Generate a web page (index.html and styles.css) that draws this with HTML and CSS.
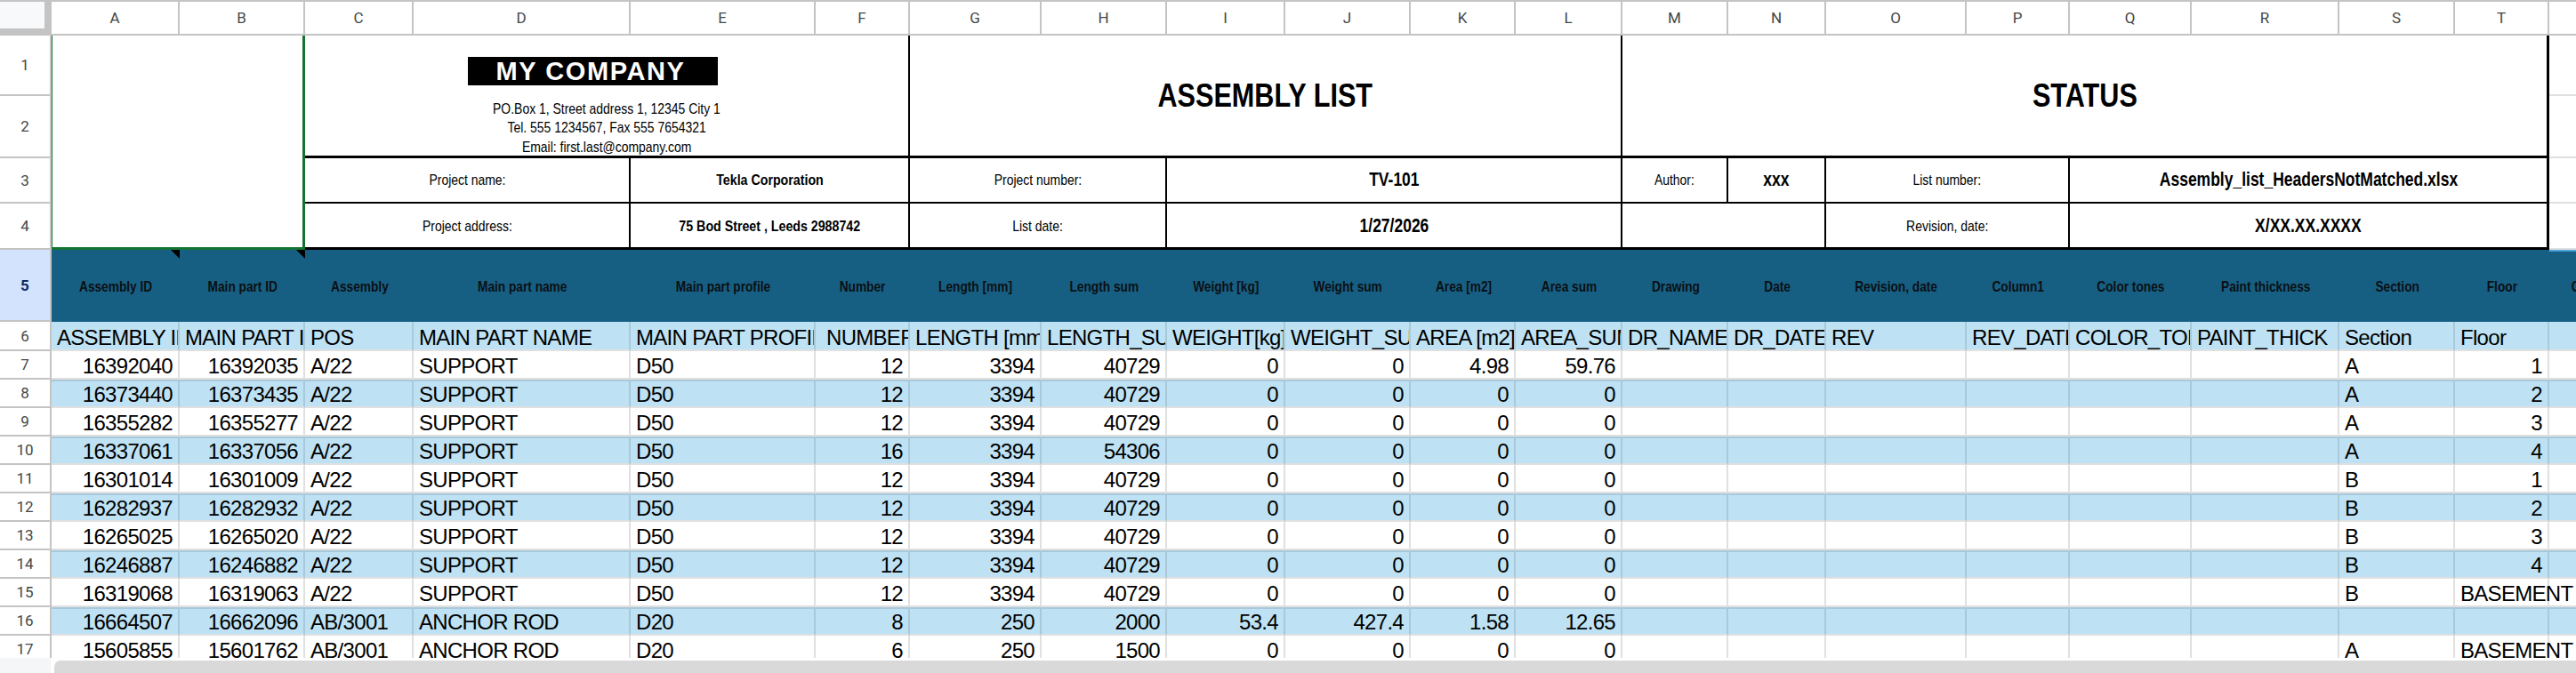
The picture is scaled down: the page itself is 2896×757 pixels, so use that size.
FILE: index.html
```html
<!DOCTYPE html>
<html>
<head>
<meta charset="utf-8">
<title>Assembly list</title>
<link rel="stylesheet" href="styles.css">
</head>
<body>
<div class="sheet">
<table class="grid">
<colgroup>
<col class="c-row"><col class="c-a"><col class="c-b"><col class="c-c"><col class="c-d"><col class="c-e"><col class="c-f"><col class="c-g"><col class="c-h"><col class="c-i"><col class="c-j"><col class="c-k"><col class="c-l"><col class="c-m"><col class="c-n"><col class="c-o"><col class="c-p"><col class="c-q"><col class="c-r"><col class="c-s"><col class="c-t"><col class="c-u">
</colgroup>
<tr class="letters">
<th class="corner"><div class="corner-box"></div></th>
<th>A</th><th>B</th><th>C</th><th>D</th><th>E</th><th>F</th><th>G</th><th>H</th><th>I</th><th>J</th><th>K</th><th>L</th><th>M</th><th>N</th><th>O</th><th>P</th><th>Q</th><th>R</th><th>S</th><th>T</th><th></th>
</tr>
<tr class="r1">
<th class="num">1</th>
<td class="logo-cell" colspan="2" rowspan="4"></td>
<td class="company" colspan="4" rowspan="2">
<div class="company-box">
<div class="company-name">MY COMPANY</div>
<div class="company-line"><span class="nw">PO.Box 1, Street address 1, 12345 City 1</span></div>
<div class="company-line"><span class="nw">Tel. 555 1234567, Fax 555 7654321</span></div>
<div class="company-line"><span class="nw">Email: first.last@company.com</span></div>
</div>
</td>
<td class="title" colspan="6" rowspan="2"><span class="nw">ASSEMBLY LIST</span></td>
<td class="title edge-r" colspan="8" rowspan="2"><span class="nw">STATUS</span></td>
<td class="free"></td>
</tr>
<tr class="r2"><th class="num">2</th><td class="free"></td></tr>
<tr class="r3">
<th class="num">3</th>
<td class="label" colspan="2"><span class="nw">Project name:</span></td>
<td class="value" colspan="2"><span class="nw">Tekla Corporation</span></td>
<td class="label" colspan="2"><span class="nw">Project number:</span></td>
<td class="value big" colspan="4"><span class="nw">TV-101</span></td>
<td class="label"><span class="nw">Author:</span></td>
<td class="value big"><span class="nw">xxx</span></td>
<td class="label" colspan="2"><span class="nw">List number:</span></td>
<td class="value big edge-r" colspan="4"><span class="nw">Assembly_list_HeadersNotMatched.xlsx</span></td>
<td class="free"></td>
</tr>
<tr class="r4">
<th class="num">4</th>
<td class="label" colspan="2"><span class="nw">Project address:</span></td>
<td class="value" colspan="2"><span class="nw">75 Bod Street , Leeds 2988742</span></td>
<td class="label" colspan="2"><span class="nw">List date:</span></td>
<td class="value big" colspan="4"><span class="nw">1/27/2026</span></td>
<td class="label" colspan="2"></td>
<td class="label" colspan="2"><span class="nw">Revision, date:</span></td>
<td class="value big edge-r" colspan="4"><span class="nw">X/XX.XX.XXXX</span></td>
<td class="free"></td>
</tr>
<tr class="r5">
<th class="num active">5</th>
<td class="noted"><span class="nw">Assembly ID</span></td>
<td class="noted"><span class="nw">Main part ID</span></td>
<td><span class="nw">Assembly</span></td>
<td><span class="nw">Main part name</span></td>
<td><span class="nw">Main part profile</span></td>
<td><span class="nw">Number</span></td>
<td><span class="nw">Length [mm]</span></td>
<td><span class="nw">Length sum</span></td>
<td><span class="nw">Weight [kg]</span></td>
<td><span class="nw">Weight sum</span></td>
<td><span class="nw">Area [m2]</span></td>
<td><span class="nw">Area sum</span></td>
<td><span class="nw">Drawing</span></td>
<td><span class="nw">Date</span></td>
<td><span class="nw">Revision, date</span></td>
<td><span class="nw">Column1</span></td>
<td><span class="nw">Color tones</span></td>
<td><span class="nw">Paint thickness</span></td>
<td><span class="nw">Section</span></td>
<td><span class="nw">Floor</span></td>
<td class="last"><span class="nw">Comments</span></td>
</tr>
<tr class="row alt head">
<th class="num">6</th>
<td>ASSEMBLY ID</td><td>MAIN PART ID</td><td>POS</td><td>MAIN PART NAME</td><td>MAIN PART PROFILE</td><td class="indent">NUMBER</td><td>LENGTH [mm]</td><td>LENGTH_SUM</td><td>WEIGHT[kg]</td><td>WEIGHT_SUM</td><td>AREA [m2]</td><td>AREA_SUM</td><td>DR_NAME</td><td>DR_DATE</td><td>REV</td><td>REV_DATE</td><td>COLOR_TONES</td><td>PAINT_THICK</td><td>Section</td><td>Floor</td><td></td>
</tr>
<tr class="row">
<th class="num">7</th>
<td class="n">16392040</td><td class="n">16392035</td><td>A/22</td><td>SUPPORT</td><td>D50</td><td class="n">12</td><td class="n">3394</td><td class="n">40729</td><td class="n">0</td><td class="n">0</td><td class="n">4.98</td><td class="n">59.76</td><td></td><td></td><td></td><td></td><td></td><td></td><td>A</td><td class="n">1</td><td></td>
</tr>
<tr class="row alt">
<th class="num">8</th>
<td class="n">16373440</td><td class="n">16373435</td><td>A/22</td><td>SUPPORT</td><td>D50</td><td class="n">12</td><td class="n">3394</td><td class="n">40729</td><td class="n">0</td><td class="n">0</td><td class="n">0</td><td class="n">0</td><td></td><td></td><td></td><td></td><td></td><td></td><td>A</td><td class="n">2</td><td></td>
</tr>
<tr class="row">
<th class="num">9</th>
<td class="n">16355282</td><td class="n">16355277</td><td>A/22</td><td>SUPPORT</td><td>D50</td><td class="n">12</td><td class="n">3394</td><td class="n">40729</td><td class="n">0</td><td class="n">0</td><td class="n">0</td><td class="n">0</td><td></td><td></td><td></td><td></td><td></td><td></td><td>A</td><td class="n">3</td><td></td>
</tr>
<tr class="row alt">
<th class="num">10</th>
<td class="n">16337061</td><td class="n">16337056</td><td>A/22</td><td>SUPPORT</td><td>D50</td><td class="n">16</td><td class="n">3394</td><td class="n">54306</td><td class="n">0</td><td class="n">0</td><td class="n">0</td><td class="n">0</td><td></td><td></td><td></td><td></td><td></td><td></td><td>A</td><td class="n">4</td><td></td>
</tr>
<tr class="row">
<th class="num">11</th>
<td class="n">16301014</td><td class="n">16301009</td><td>A/22</td><td>SUPPORT</td><td>D50</td><td class="n">12</td><td class="n">3394</td><td class="n">40729</td><td class="n">0</td><td class="n">0</td><td class="n">0</td><td class="n">0</td><td></td><td></td><td></td><td></td><td></td><td></td><td>B</td><td class="n">1</td><td></td>
</tr>
<tr class="row alt">
<th class="num">12</th>
<td class="n">16282937</td><td class="n">16282932</td><td>A/22</td><td>SUPPORT</td><td>D50</td><td class="n">12</td><td class="n">3394</td><td class="n">40729</td><td class="n">0</td><td class="n">0</td><td class="n">0</td><td class="n">0</td><td></td><td></td><td></td><td></td><td></td><td></td><td>B</td><td class="n">2</td><td></td>
</tr>
<tr class="row">
<th class="num">13</th>
<td class="n">16265025</td><td class="n">16265020</td><td>A/22</td><td>SUPPORT</td><td>D50</td><td class="n">12</td><td class="n">3394</td><td class="n">40729</td><td class="n">0</td><td class="n">0</td><td class="n">0</td><td class="n">0</td><td></td><td></td><td></td><td></td><td></td><td></td><td>B</td><td class="n">3</td><td></td>
</tr>
<tr class="row alt">
<th class="num">14</th>
<td class="n">16246887</td><td class="n">16246882</td><td>A/22</td><td>SUPPORT</td><td>D50</td><td class="n">12</td><td class="n">3394</td><td class="n">40729</td><td class="n">0</td><td class="n">0</td><td class="n">0</td><td class="n">0</td><td></td><td></td><td></td><td></td><td></td><td></td><td>B</td><td class="n">4</td><td></td>
</tr>
<tr class="row">
<th class="num">15</th>
<td class="n">16319068</td><td class="n">16319063</td><td>A/22</td><td>SUPPORT</td><td>D50</td><td class="n">12</td><td class="n">3394</td><td class="n">40729</td><td class="n">0</td><td class="n">0</td><td class="n">0</td><td class="n">0</td><td></td><td></td><td></td><td></td><td></td><td></td><td>B</td><td class="spill">BASEMENT</td><td></td>
</tr>
<tr class="row alt">
<th class="num">16</th>
<td class="n">16664507</td><td class="n">16662096</td><td>AB/3001</td><td>ANCHOR ROD</td><td>D20</td><td class="n">8</td><td class="n">250</td><td class="n">2000</td><td class="n">53.4</td><td class="n">427.4</td><td class="n">1.58</td><td class="n">12.65</td><td></td><td></td><td></td><td></td><td></td><td></td><td></td><td></td><td></td>
</tr>
<tr class="row">
<th class="num">17</th>
<td class="n">15605855</td><td class="n">15601762</td><td>AB/3001</td><td>ANCHOR ROD</td><td>D20</td><td class="n">6</td><td class="n">250</td><td class="n">1500</td><td class="n">0</td><td class="n">0</td><td class="n">0</td><td class="n">0</td><td></td><td></td><td></td><td></td><td></td><td></td><td>A</td><td class="spill">BASEMENT</td><td></td>
</tr>
</table>
</div>
<div class="hscroll">
<div class="hscroll-side"></div>
<div class="hscroll-thumb"></div>
</div>
</body>
</html>
```

FILE: styles.css
```css
html, body {
  margin: 0;
  height: 100%;
  overflow: hidden;
  background: #fff;
}

body {
  display: flex;
  flex-direction: column;
  font-family: "Liberation Sans", Arial, sans-serif;
  color: #000;
}

.sheet {
  flex: 1;
  min-height: 0;
  overflow: hidden;
  border-top: 2px solid #c4c4c4;
}

.grid {
  table-layout: fixed;
  border-collapse: separate;
  border-spacing: 0;
  width: 2986px;
}

.grid td, .grid th {
  box-sizing: border-box;
  padding: 0;
  white-space: nowrap;
  overflow: hidden;
}

/* no narrow face is installed, so squeeze the regular one */
.nw {
  display: inline-block;
  transform: scaleX(0.82);
}

.c-row { width: 58px; }
.c-a { width: 144px; }
.c-b { width: 141px; }
.c-c { width: 122px; }
.c-d { width: 244px; }
.c-e { width: 208px; }
.c-f { width: 106px; }
.c-g { width: 148px; }
.c-h { width: 141px; }
.c-i { width: 133px; }
.c-j { width: 141px; }
.c-k { width: 118px; }
.c-l { width: 120px; }
.c-m { width: 119px; }
.c-n { width: 110px; }
.c-o { width: 158px; }
.c-p { width: 116px; }
.c-q { width: 137px; }
.c-r { width: 166px; }
.c-s { width: 130px; }
.c-t { width: 106px; }
.c-u { width: 120px; }

/* column letters */
.letters { height: 38px; }

.letters th {
  font-family: Roboto, "Liberation Sans", sans-serif;
  font-size: 17px;
  font-weight: 400;
  color: #444746;
  background: #fff;
  border-right: 2px solid #c4c4c4;
  border-bottom: 2px solid #c4c4c4;
}

.letters th.corner {
  background: #c4c4c4;
  border-right: 0;
  border-bottom: 0;
  vertical-align: top;
}

.corner-box {
  width: 50px;
  height: 30px;
  background: #f8f9fa;
}

/* row numbers */
.num {
  font-family: Roboto, "Liberation Sans", sans-serif;
  font-size: 17px;
  font-weight: 400;
  color: #444746;
  background: #fff;
  border-right: 2px solid #c4c4c4;
  border-bottom: 2px solid #c4c4c4;
}

.num.active {
  background: #d3e3fd;
  color: #0b2a66;
  font-weight: 700;
}

.r1 { height: 68px; }
.r2 { height: 70px; }
.r3 { height: 51px; }
.r4 { height: 52px; }
.r5 { height: 81px; }

/* title block */
.logo-cell {
  border-left: 1px solid #137333;
  border-right: 3px solid #137333;
  border-bottom: 3px solid #137333;
}

.company {
  vertical-align: bottom;
  border-right: 2px solid #000;
  border-bottom: 3px solid #000;
}

.company-box {
  display: flex;
  flex-direction: column;
  align-items: center;
  margin-bottom: -1px;
}

.company-name {
  box-sizing: border-box;
  width: 281px;
  height: 32px;
  margin: 0 31px 16px 0;
  padding-right: 5px;
  background: #000;
  color: #fff;
  font-size: 29px;
  font-weight: 700;
  line-height: 32px;
  text-align: center;
  letter-spacing: 1.6px;
}

.company-line {
  font-size: 17px;
  line-height: 21.5px;
}

.title {
  text-align: center;
  font-size: 37.33px;
  font-weight: 700;
  border-right: 2px solid #000;
  border-bottom: 3px solid #000;
}

.title.edge-r, .value.edge-r { border-right-width: 3px; }

.label, .value {
  text-align: center;
  border-right: 2px solid #000;
}

.label { font-size: 17px; }
.value { font-size: 17.33px; font-weight: 700; }
.value.big { font-size: 21.33px; }

.r3 .label, .r3 .value { border-bottom: 2px solid #000; }
.r4 .label, .r4 .value { border-bottom: 3px solid #000; padding-top: 2px; }

.free {
  border-right: 2px solid #e0e0e0;
  border-bottom: 2px solid #e0e0e0;
}

/* header row with the dark band */
.r5 td {
  padding-top: 3px;
  background: #175f82;
  font-size: 16.7px;
  font-weight: 700;
  text-align: center;
  color: #0a0f14;
  position: relative;
}

.r5 td.noted::after {
  content: "";
  position: absolute;
  top: 0;
  right: 0;
  border-top: 10px solid #000;
  border-left: 10px solid transparent;
}

.r5 td.last {
  box-shadow: inset 0 2px 0 #4aa3d8;
}

/* data rows */
.row { height: 32px; }
.row.head { height: 33px; }

.row td {
  padding: 0 6px;
  font-size: 24px;
  letter-spacing: -0.7px;
  line-height: 26px;
  vertical-align: bottom;
  background: #fff;
  border-right: 2px solid #e0e0e0;
  border-bottom: 2px solid #e0e0e0;
}

.row.alt td {
  background: #bee2f4;
  border-right-color: #a9c9db;
  border-bottom-color: #e0e0e0;
  box-shadow: inset 0 2px 0 #a9c9db;
}

.row.head td {
  box-shadow: none;
}

.row td.n { text-align: right; }
.row td.indent { padding-left: 12px; }
.row td.spill { overflow: visible; }

/* bottom scroll bar */
.hscroll {
  flex: none;
  display: flex;
  height: 17px;
  background: #fff;
}

.hscroll-side {
  width: 57px;
  background: #f5f6f7;
}

.hscroll-thumb {
  flex: 1;
  margin: 3px 0 0 4px;
  background: #d9d9d9;
  border-radius: 7px 0 0 0;
}
```
